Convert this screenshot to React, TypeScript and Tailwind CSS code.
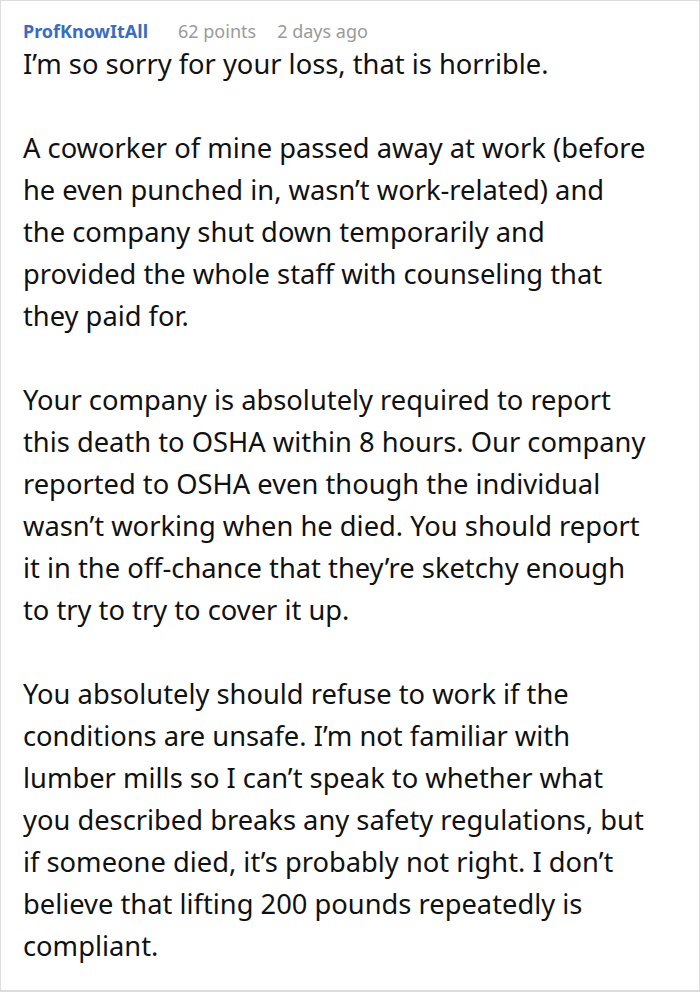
import React from "react";

const paras: string[][] = [
  ["I’m so sorry for your loss, that is horrible."],
  [
    "A coworker of mine passed away at work (before",
    "he even punched in, wasn’t work-related) and",
    "the company shut down temporarily and",
    "provided the whole staff with counseling that",
    "they paid for.",
  ],
  [
    "Your company is absolutely required to report",
    "this death to OSHA within 8 hours. Our company",
    "reported to OSHA even though the individual",
    "wasn’t working when he died. You should report",
    "it in the off-chance that they’re sketchy enough",
    "to try to try to cover it up.",
  ],
  [
    "You absolutely should refuse to work if the",
    "conditions are unsafe. I’m not familiar with",
    "lumber mills so I can’t speak to whether what",
    "you described breaks any safety regulations, but",
    "if someone died, it’s probably not right. I don’t",
    "believe that lifting 200 pounds repeatedly is",
    "compliant.",
  ],
];

export default function App() {
  return (
    <div className="w-[700px] h-[992px] bg-white border border-b-2 border-[#dcdcdc] box-border font-['Noto_Sans',sans-serif] overflow-hidden">
      <div className="pl-[22px] pt-[18px]">
        <div className="flex items-center text-[18px] leading-[24px]">
          <span className="font-bold text-[#3a6cc0] mr-[30px]">ProfKnowItAll</span>
          <span className="text-[#9a9a9a] mr-[21px]">62 points</span>
          <span className="text-[#9a9a9a]">2 days ago</span>
        </div>
        <div className="text-[27.3px] leading-[42px] text-[#111] flex flex-col gap-[42px]">
          {paras.map((p, i) => (
            <p key={i} className="whitespace-nowrap">
              {p.map((l, j) => (
                <React.Fragment key={j}>
                  {l}
                  {j < p.length - 1 && <br />}
                </React.Fragment>
              ))}
            </p>
          ))}
        </div>
      </div>
    </div>
  );
}
